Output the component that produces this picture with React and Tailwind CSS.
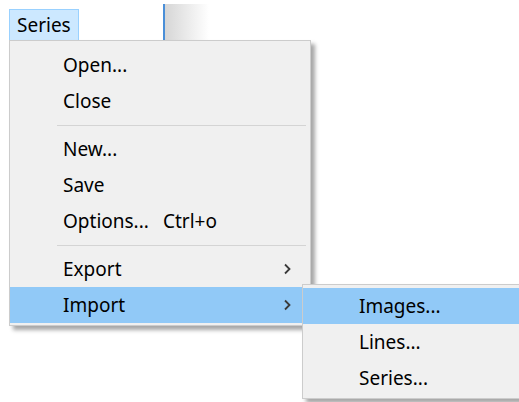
import React from "react";

const font = { fontFamily: '"Noto Sans", "Open Sans", Arial, sans-serif' };

function Chevron() {
  return (
    <svg width="10" height="14" viewBox="0 0 10 14" className="block">
      <path d="M3 2.5 L7.5 7 L3 11.5" fill="none" stroke="#3a3a3a" strokeWidth="1.8" />
    </svg>
  );
}

function Item({ label, shortcut, sub, active, pad = "pl-[53px]" }) {
  return (
    <div
      className={`flex h-[36px] items-center ${pad} pr-[18px] text-[19px] text-black ${
        active ? "bg-[#91c9f7]" : ""
      }`}
    >
      <span className={shortcut ? "w-[100px]" : "flex-1"}>{label}</span>
      {shortcut && <span className="flex-1">{shortcut}</span>}
      {sub && <Chevron />}
    </div>
  );
}

function Separator() {
  return (
    <div className="flex h-[12px] items-center pl-[47px] pr-[4px]">
      <div className="h-px flex-1 bg-[#d4d4d4]" />
    </div>
  );
}

export default function App() {
  return (
    <div className="relative h-[402px] w-[519px] overflow-hidden bg-white" style={font}>
      {/* menu bar strip */}
      <div className="flex h-[41px]">
        <div className="w-[9px]" />
        <div className="mt-[9px] flex h-[32px] w-[70px] items-center border border-[#99d1ff] bg-[#cce8ff] pl-[7px] text-[19px] text-black">
          Series
        </div>
        <div className="w-[84px]" />
        <div className="mt-[4px] w-[2px] bg-[#4a8fd8]" />
        <div className="mt-[4px] w-[44px] bg-gradient-to-r from-[#d6d6d6] to-white" />
        <div className="flex-1" />
      </div>

      {/* Series drop-down */}
      <div className="absolute left-[9px] top-[40px] w-[302px] border border-[#cccccc] bg-[#f0f0f0] pb-[2px] pt-[6px] shadow-[4px_4px_4px_rgba(0,0,0,0.35)]">
        <Item label="Open..." />
        <Item label="Close" />
        <Separator />
        <Item label="New..." />
        <Item label="Save" />
        <Item label="Options..." shortcut="Ctrl+o" />
        <Separator />
        <Item label="Export" sub />
        <Item label="Import" sub active />
      </div>

      {/* Import submenu */}
      <div className="absolute left-[302px] top-[284px] w-[240px] border border-[#cccccc] bg-[#f0f0f0] pb-[2px] pt-[3px] shadow-[4px_4px_4px_rgba(0,0,0,0.35)]">
        <Item label="Images..." active pad="pl-[56px]" />
        <Item label="Lines..." pad="pl-[56px]" />
        <Item label="Series..." pad="pl-[56px]" />
      </div>
    </div>
  );
}
